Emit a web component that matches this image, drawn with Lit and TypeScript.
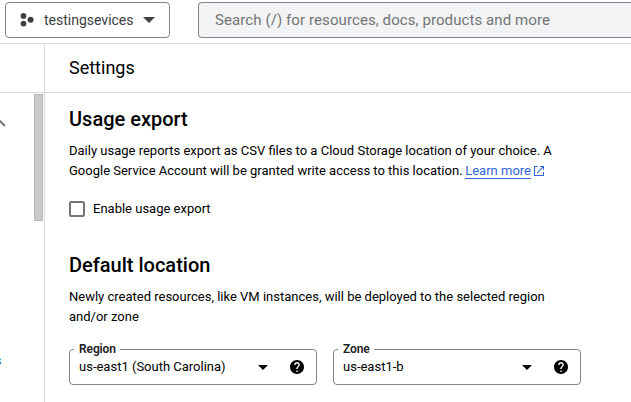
import { LitElement, html, css } from "lit";
import { customElement, property } from "lit/decorators.js";

const caret = (w: number, h: number) => html`<svg width=${w} height=${h} viewBox="0 0 10 5" preserveAspectRatio="none">
  <path d="M0 0h10L5 5z" fill="currentColor" />
</svg>`;

@customElement("select-field")
export class SelectField extends LitElement {
  @property() label = "";
  @property() value = "";

  static styles = css`
    :host { display: block; width: 248px; }
    .field {
      position: relative; box-sizing: border-box; height: 36px;
      display: flex; align-items: center;
      border: 1px solid #80868b; border-radius: 4px;
      padding: 0 12px 0 9px; color: #000;
    }
    .label {
      position: absolute; left: 4px; top: -9px; padding: 0 4px 0 5px;
      background: #fff; color: #212121;
      font-size: 12px; font-weight: 600; line-height: 16px; letter-spacing: -0.1px;
    }
    .value { flex: 1; font-size: 13px; line-height: 20px; }
    .help { margin-left: 22px; }
    svg { display: block; }
  `;

  render() {
    return html`<div class="field">
      <span class="label">${this.label}</span>
      <span class="value">${this.value}</span>
      ${caret(10, 5)}
      <svg class="help" width="14" height="14" viewBox="2 2 20 20">
        <path fill="currentColor" d="M12 2C6.48 2 2 6.48 2 12s4.48 10 10 10 10-4.48 10-10S17.52 2 12 2zm1 17h-2v-2h2v2zm2.07-7.75l-.9.92C13.45 12.9 13 13.5 13 15h-2v-.5c0-1.1.45-2.1 1.17-2.83l1.24-1.26c.37-.36.59-.86.59-1.41 0-1.1-.9-2-2-2s-2 .9-2 2H8c0-2.21 1.79-4 4-4s4 1.79 4 4c0 .88-.36 1.68-.93 2.25z" />
      </svg>
    </div>`;
  }
}

@customElement("app-root")
export class AppRoot extends LitElement {
  static styles = css`
    :host {
      display: flex; flex-direction: column; height: 402px; overflow: hidden;
      background: #fff; color: #000;
      font-family: Roboto, "Liberation Sans", sans-serif; font-size: 13px;
    }
    svg { display: block; }
    .top {
      flex: none; box-sizing: border-box; height: 44px; display: flex;
      padding: 2px 0 0 5px; gap: 28px; border-bottom: 1px solid #dadce0;
    }
    .project {
      box-sizing: border-box; width: 165px; height: 36px;
      display: flex; align-items: center; padding: 0 14px;
      border: 1px solid #80868b; border-radius: 4px;
      color: #3c4043; font-size: 14px;
    }
    .name { margin: 0 9.5px 0 9px; }
    .search {
      flex: 1; box-sizing: border-box; height: 36px; display: flex; align-items: center;
      padding-left: 16px; border: 1px solid #80868b; border-right: 0;
      border-radius: 4px 0 0 4px; background: #f1f3f4; color: #757575;
      font-size: 15px; letter-spacing: 0.09px;
    }
    .body { flex: 1; min-height: 0; display: flex; }
    .side {
      box-sizing: border-box; width: 45px; flex: none; border-right: 1px solid #dadce0;
      display: flex; flex-direction: column;
    }
    .side-head { height: 48px; flex: none; border-bottom: 1px solid #dadce0; }
    .side-main { flex: 1; display: flex; justify-content: space-between; overflow: hidden; }
    .nav { display: flex; flex-direction: column; }
    .chev { margin: 27px 0 0 -6px; color: #757575; }
    .item { margin: 224px 0 0 -5.5px; color: #0b2f8c; font-size: 13px; font-weight: 500; line-height: 20px; }
    .thumb {
      box-sizing: border-box; width: 9px; height: 127px; margin: 1px 1px 0 0;
      background: #cacaca; border: 1px solid #b8b8b8;
    }
    .content { flex: 1; min-width: 0; }
    .title {
      height: 48px; border-bottom: 1px solid #dadce0; padding-left: 24px;
      font-size: 18px; line-height: 48px; font-weight: 400; margin: 0;
    }
    .main { padding: 14px 0 0 24px; }
    h2 { margin: 0; font-size: 20px; line-height: 24px; font-weight: 500; }
    p { margin: 10px 0 0; line-height: 20px; white-space: nowrap; }
    .link { margin-left: -0.5px; color: #3367d6; text-decoration: none; border-bottom: 1px solid #3367d6; }
    .ext { display: inline-block; vertical-align: -1px; margin-left: 2.5px; color: #3367d6; }
    .check { display: flex; align-items: center; gap: 8px; height: 20px; margin: 18px 0 34px; }
    .box { box-sizing: border-box; width: 16px; height: 16px; border: 2px solid #757575; border-radius: 2px; }
    .check-label { line-height: 16px; }
    .fields { display: flex; gap: 16px; margin-top: 22px; }
  `;

  render() {
    return html`
      <header class="top">
        <div class="project">
          <svg width="15" height="14" viewBox="0 0 15 14" fill="currentColor">
            <circle cx="3.5" cy="2.9" r="2.9" /><circle cx="10.6" cy="6.7" r="3" /><circle cx="3.5" cy="10.6" r="2.9" />
          </svg>
          <span class="name">testingsevices</span>
          ${caret(12, 6)}
        </div>
        <div class="search">Search (/) for resources, docs, products and more</div>
      </header>
      <div class="body">
        <aside class="side">
          <div class="side-head"></div>
          <div class="side-main">
            <div class="nav">
              <svg class="chev" width="12" height="7" viewBox="0 0 12 7">
                <path d="M1 6l5-5 5 5" fill="none" stroke="currentColor" stroke-width="2" />
              </svg>
              <span class="item">s</span>
            </div>
            <div class="thumb"></div>
          </div>
        </aside>
        <section class="content">
          <h1 class="title">Settings</h1>
          <div class="main">
            <h2>Usage export</h2>
            <p>
              Daily usage reports export as CSV files to a Cloud Storage location of your choice. A<br />
              Google Service Account will be granted write access to this location.
              <a class="link">Learn more</a><svg class="ext" width="10" height="10" viewBox="0 0 10 10">
                <path d="M4 .5H.5v9h9V6M6 .5h3.5V4M9.3.7L3.2 6.8" fill="none" stroke="currentColor" stroke-width="1.1" />
              </svg>
            </p>
            <div class="check"><span class="box"></span><span class="check-label">Enable usage export</span></div>
            <h2>Default location</h2>
            <p>
              Newly created resources, like VM instances, will be deployed to the selected region<br />
              and/or zone
            </p>
            <div class="fields">
              <select-field label="Region" value="us-east1 (South Carolina)"></select-field>
              <select-field label="Zone" value="us-east1-b"></select-field>
            </div>
          </div>
        </section>
      </div>
    `;
  }
}
